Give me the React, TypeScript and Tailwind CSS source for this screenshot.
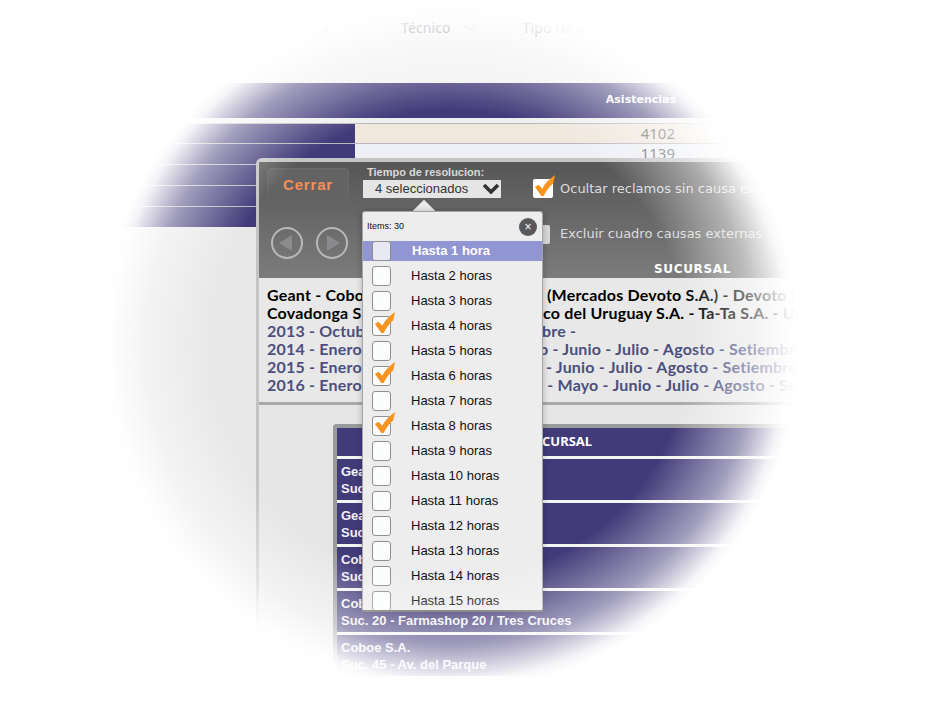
const items = Array.from({ length: 30 }, (_, i) => i + 1);
const checked = [4, 6, 8];

function Check({ className }: { className: string }) {
  return (
    <svg viewBox="0 0 24 24" className={className}>
      <path d="M1 13 L5 10.5 L9 15 C12 9 17 4 23 0 L21 9 C17 12 13.5 17 10.5 23 L8 23 Z" fill="#f7931e" />
    </svg>
  );
}

const lines = [
  { left: 'Geant - Coboe S.A. - Disco', right: '(Mercados Devoto S.A.) - Devoto Hnos', color: 'text-black', ml: 'ml-[4px]' },
  { left: 'Covadonga S.A. - Supermercado', right: 'co del Uruguay S.A. - Ta-Ta S.A. - Unico', color: 'text-black', ml: 'ml-[0px]' },
  { left: '2013 - Octubre - Noviembre', right: 'bre -', color: 'text-[#4b4f7f]', ml: 'ml-[-1px]' },
  { left: '2014 - Enero - Febrero - Marzo', right: 'o - Junio - Julio - Agosto - Setiembre', color: 'text-[#4b4f7f]', ml: 'ml-[-4px]' },
  { left: '2015 - Enero - Febrero - Marzo', right: '- Junio - Julio - Agosto - Setiembre', color: 'text-[#4b4f7f]', ml: 'ml-[3px]' },
  { left: '2016 - Enero - Febrero - Marzo', right: 'l - Mayo - Junio - Julio - Agosto - Setiembre', color: 'text-[#4b4f7f]', ml: 'ml-[-4px]' },
];

const sucursales = [
  ['Geant', 'Suc. 1 - Geant Parque'],
  ['Geant', 'Suc. 2 - Geant Nuevocentro'],
  ['Coboe S.A.', 'Suc. 12 - Farmashop 12'],
  ['Coboe S.A.', 'Suc. 20 - Farmashop 20 / Tres Cruces'],
  ['Coboe S.A.', 'Suc. 45 - Av. del Parque'],
];

export default function App() {
  return (
    <div className="relative w-[933px] h-[703px] overflow-hidden bg-[#e9e8e8] font-['Liberation_Sans',sans-serif]">
      {/* filter bar */}
      <div className="h-[83px] flex items-start pt-[17px] bg-[#f2f1f1] font-['Noto_Sans',sans-serif] text-[14px] tracking-[0.1px] text-[#6f6f75]">
        <span className="ml-[298px] w-[103px]">Área</span>
        <span>Técnico</span>
        <svg viewBox="0 0 16 8" className="w-[14px] h-[7px] ml-[12px] mt-[7px]">
          <path d="M1 1 L8 7 L15 1" fill="none" stroke="#b5b5b8" strokeWidth="1" />
        </svg>
        <span className="ml-[46px]">Tipo reclamo</span>
      </div>

      {/* base table */}
      <div className="h-[35px] bg-[#423b7a] flex items-center justify-end pr-[257px] font-['DejaVu_Sans',sans-serif] text-[11px] font-bold text-white">
        Asistencias
      </div>
      <div className="h-[5px] bg-[#f0efef]" />
      <div className="flex flex-col">
        {['4102', '1139', '', '', ''].map((n, i) => (
          <div key={i} className={`flex border-t border-[#b9b8bc] ${i === 0 ? 'h-[20px]' : 'h-[21px]'}`}>
            <div className="w-[355px] bg-[#423b7a]" />
            <div className={`flex-1 flex justify-end pr-[258px] text-[15px] leading-[18px] text-[#6b6b6b] font-['Noto_Sans',sans-serif] ${i === 0 ? 'bg-[#f0e7dd]' : 'bg-[#eef0f6]'}`}>
              {n}
            </div>
          </div>
        ))}
      </div>

      {/* window */}
      <div className="absolute left-[256px] top-[158px] right-0 bottom-0 border-l-[3px] border-t-[4px] border-[#c4c4c4] rounded-tl-[6px] bg-[#e6e6e6] flex flex-col">
        <div className="h-[116px] shrink-0 bg-gradient-to-b from-[#575656] to-[#7c7c7c] pl-[8px] flex flex-col">
          <div className="h-[40px] shrink-0 flex items-start pt-[6px]">
            <button className="w-[82px] h-[34px] rounded-[4px] bg-[#646363] border border-[#6a6969] text-[15px] font-bold tracking-[0.8px] text-[#f58f58]">
              Cerrar
            </button>
            <div className="ml-[14px] -mt-[2px] w-[138px]">
              <div className="pl-[4px] text-[11px] leading-[12px] font-bold text-[#d9d9d9]">
                Tiempo de resolucion:
              </div>
              <div className="mt-[2px] h-[18px] bg-[#e4e5e4] flex items-center justify-between pl-[12px] pr-[1px] text-[13px] text-[#333]">
                <span>4 seleccionados</span>
                <svg viewBox="0 0 18 12" className="w-[18px] h-[12px]">
                  <path d="M2 2 L9 9 L16 2" fill="none" stroke="#333" strokeWidth="3.6" />
                </svg>
              </div>
            </div>
            <div className="relative ml-[32px] mt-[11px] w-[20px] h-[19px] bg-white rounded-[2px]">
              <Check className="absolute left-[1px] top-[-4px] w-[22px] h-[22px]" />
            </div>
            <span className="ml-[7px] mt-[11px] font-['DejaVu_Sans',sans-serif] text-[13px] whitespace-nowrap text-[#dcdcdc]">
              Ocultar reclamos sin causa externa
            </span>
          </div>
          <div className="flex items-start mt-[21px]">
            <div className="ml-[4px] mt-[4px] w-[32px] h-[32px] rounded-full border-2 border-[#b9b9b9] flex items-center justify-center">
              <div className="w-0 h-0 border-y-[8px] border-y-transparent border-r-[13px] border-r-[#8b8b8e] mr-[3px]" />
            </div>
            <div className="ml-[13px] mt-[4px] w-[32px] h-[32px] rounded-full border-2 border-[#b9b9b9] flex items-center justify-center">
              <div className="w-0 h-0 border-y-[8px] border-y-transparent border-l-[13px] border-l-[#8b8b8e] ml-[3px]" />
            </div>
            <div className="ml-[182px] mt-[2px] w-[20px] h-[19px] bg-[#d8d8d8] rounded-[2px]" />
            <span className="ml-[10px] mt-px font-['DejaVu_Sans',sans-serif] text-[13px] whitespace-nowrap text-[#dcdcdc]">
              Excluir cuadro causas externas
            </span>
          </div>
          <div className="ml-[387px] mt-px font-['DejaVu_Sans',sans-serif] text-[12px] leading-[18px] font-bold tracking-[0.65px] text-white">
            SUCURSAL
          </div>
        </div>

        <div className="h-[127px] shrink-0 pt-[8px] pl-[8px] border-b-[3px] border-[#a9a9a9] bg-[#e8e8e8] font-['Lato',sans-serif] text-[16px] leading-[18px] font-bold tracking-[0.2px]">
          {lines.map((l) => (
            <div key={l.left} className={`flex whitespace-nowrap ${l.color}`}>
              <span className="w-[276px] shrink-0 overflow-hidden">{l.left}</span>
              <span className={l.ml}>{l.right}</span>
            </div>
          ))}
        </div>

        <div className="pl-[74px] pt-[19px]">
          <div className="w-[560px] border-[4px] border-b-0 border-[#9a9a9a] rounded-tl-[4px] bg-[#f4f4f4]">
            <div className="h-[28px] bg-[#423b7a] pl-[188px] flex items-center font-['Noto_Sans',sans-serif] text-[13px] font-bold text-white">
              SUCURSAL
            </div>
            {sucursales.map(([a, b]) => (
              <div key={b} className="mt-[3px] h-[41px] bg-[#423b7a] pl-[4px] pt-[4px] text-[13px] leading-[17px] font-bold text-[#f1f1f6]">
                <div>{a}</div>
                <div>{b}</div>
              </div>
            ))}
          </div>
        </div>
      </div>

      {/* dropdown */}
      <div className="absolute left-[424px] top-[200px] w-[16px] h-[16px] -translate-x-1/2 rotate-45 origin-center bg-[#ecedec] z-10 mt-[3px]" />
      <div className="absolute left-[362px] top-[211px] w-[181px] h-[401px] z-10 flex flex-col overflow-hidden rounded-[3px] border border-[#a5a5a5] border-b-[2px] border-b-[#666] bg-[#ecedec] shadow-[0_0_6px_rgba(0,0,0,0.25)]">
        <div className="h-[29px] shrink-0 flex items-center justify-between pl-[4px] pr-[5px] text-[9px] text-[#111]">
          <span>Items: 30</span>
          <div className="w-[18px] h-[18px] rounded-full bg-[#595959] flex items-center justify-center text-[12px] leading-none text-white">
            ×
          </div>
        </div>
        <div className="flex-1 overflow-hidden">
          {items.map((n) => (
            <div key={n} className={`h-[25px] flex items-start text-[13px] leading-[20px] ${n === 1 ? 'text-white' : 'text-[#111]'}`}>
              <div className={`relative w-full h-[20px] flex items-center pl-[9px] ${n === 1 ? 'bg-[#9195d1] font-bold' : ''}`}>
                <div className={`relative shrink-0 w-[19px] h-[20px] rounded-[3px] border border-[#8f8f8f] ${n === 1 ? 'bg-[#e8e9f5]' : 'bg-[#fbfdfd]'}`}>
                  {checked.includes(n) && <Check className="absolute left-[1px] top-[-5px] w-[22px] h-[22px]" />}
                </div>
                <span className={n === 1 ? 'ml-[21px]' : 'ml-[20px]'}>
                  Hasta {n} {n === 1 ? 'hora' : 'horas'}
                </span>
              </div>
            </div>
          ))}
        </div>
      </div>

      {/* vignette */}
      <div className="absolute inset-0 z-20 pointer-events-none bg-[radial-gradient(ellipse_350px_345px_at_450px_345px,rgba(255,255,255,0)_0%,rgba(255,255,255,0)_68%,rgba(255,255,255,0.5)_87%,rgba(255,255,255,0.95)_97%,#ffffff_100%)]" />
    </div>
  );
}
